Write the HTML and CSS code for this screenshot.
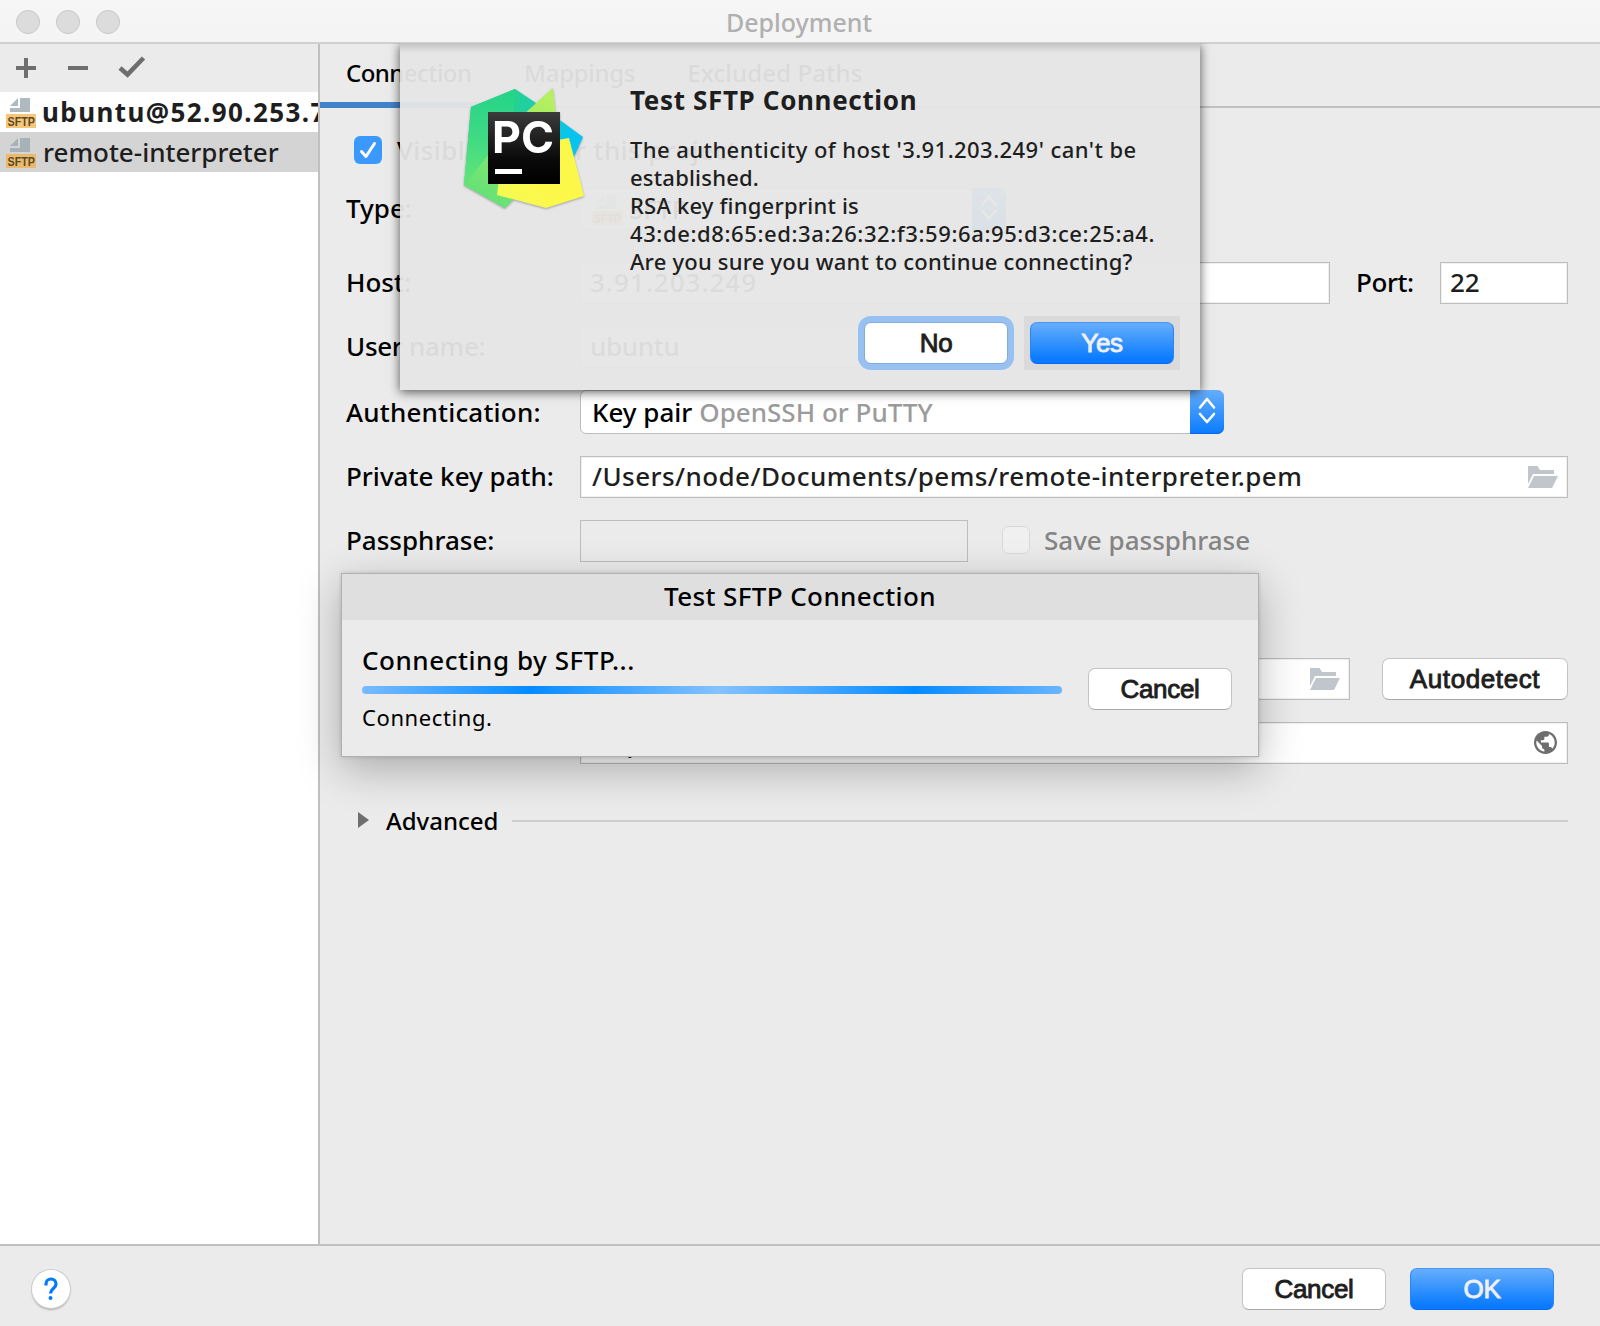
FILE: index.html
```html
<!DOCTYPE html>
<html lang="en">
<head>
<meta charset="utf-8">
<title>Deployment</title>
<link rel="stylesheet" href="styles.css">
</head>
<body>
<svg class="defs" width="0" height="0">
  <symbol id="folder" viewBox="0 0 30 22"><path d="M0 0H9.500L12 4H26V8H5L0 18Z M6 10H30L24 22H0Z"/></symbol>
  <symbol id="updown" viewBox="0 0 34 44"><path d="M10 17.500 17 9 24 17.500 M10 24 17 32 24 24" fill="none" stroke="#fff" stroke-width="2.600" stroke-linecap="round" stroke-linejoin="round"/></symbol>
</svg>
<div class="window">
  <header class="titlebar"><div class="lights"><i></i><i></i><i></i></div><h1>Deployment</h1></header>
  <div class="content">
    <aside class="sidebar">
      <div class="toolbar">
        <svg width="20" height="20" viewBox="0 0 20 20"><path d="M8 0h4v8h8v4h-8v8H8v-8H0V8h8z" fill="#6e6e6e"/></svg>
        <svg width="20" height="20" viewBox="0 0 20 20"><path d="M0 8h20v4H0z" fill="#6e6e6e"/></svg>
        <svg width="28" height="22" viewBox="0 0 28 22"><path d="M2 12 9.500 18.500 25.500 2" fill="none" stroke="#6e6e6e" stroke-width="4.600"/></svg>
      </div>
      <div class="server"><svg class="sftp" viewBox="0 0 30 30"><path d="M4 8 12 0V8Z M14 0H24V14H4V10H14Z" fill="#9aa7b0" fill-opacity=".8"/><rect y="16" width="30" height="14" fill="#f4af3d" fill-opacity=".7"/><text x="1.500" y="27.500" textLength="27.500" lengthAdjust="spacingAndGlyphs">SFTP</text></svg><b class="ls-14">ubuntu@52.90.253.7</b></div>
      <div class="server selected"><svg class="sftp" viewBox="0 0 30 30"><path d="M4 8 12 0V8Z M14 0H24V14H4V10H14Z" fill="#9aa7b0" fill-opacity=".8"/><rect y="16" width="30" height="14" fill="#f4af3d" fill-opacity=".7"/><text x="1.500" y="27.500" textLength="27.500" lengthAdjust="spacingAndGlyphs">SFTP</text></svg><span>remote-interpreter</span></div>
    </aside>
    <main class="panel">
      <nav class="tabs"><div class="tab active"><span class="ls-n5">Connection</span></div><div class="tab"><span class="ls-n3">Mappings</span></div><div class="tab"><span class="ls-1">Excluded Paths</span></div></nav>
      <div class="form">
        <div class="row visible"><span class="checkbox checked"><svg width="28" height="28" viewBox="0 0 28 28"><path d="M7.500 15.500 12 20.500 20.500 7.500" fill="none" stroke="#fff" stroke-width="3" stroke-linecap="round" stroke-linejoin="round"/></svg></span><span class="ls-4">Visible only for this project</span></div>
        <div class="row type"><label>Type:</label><div class="combo small"><svg class="sftp" viewBox="0 0 30 30"><path d="M4 8 12 0V8Z M14 0H24V14H4V10H14Z" fill="#9aa7b0" fill-opacity=".8"/><rect y="16" width="30" height="14" fill="#f4af3d" fill-opacity=".7"/><text x="1.500" y="27.500" textLength="27.500" lengthAdjust="spacingAndGlyphs">SFTP</text></svg><span>SFTP</span><svg class="arrow"><use href="#updown"/></svg></div></div>
        <div class="row host"><label>Host:</label><div class="field grow tight"><span class="ls-10">3.91.203.249</span></div><label class="port ls-n4">Port:</label><div class="field portfield"><span>22</span></div></div>
        <div class="row"><label class="ls-n3">User name:</label><div class="field short tight"><span class="ls-n3">ubuntu</span></div></div>
        <div class="row auth"><label class="ls-2">Authentication:</label><div class="combo"><span>Key pair</span><span class="hint">OpenSSH or PuTTY</span><svg class="arrow"><use href="#updown"/></svg></div></div>
        <div class="row"><label>Private key path:</label><div class="field grow"><span class="ls-45">/Users/node/Documents/pems/remote-interpreter.pem</span><svg class="folder"><use href="#folder"/></svg></div></div>
        <div class="row"><label>Passphrase:</label><div class="field short disabled"></div><span class="checkbox off"></span><span class="save">Save passphrase</span></div>
        <div class="row root"><label></label><div class="field grow"><svg class="folder"><use href="#folder"/></svg></div><button class="btn autodetect">Autodetect</button></div>
        <div class="row"><label></label><div class="field grow tight"><span>http://</span><svg class="globe" viewBox="2 2 20 20"><path d="M12 2C6.480 2 2 6.480 2 12s4.480 10 10 10 10-4.480 10-10S17.520 2 12 2zm-1 17.930c-3.950-.49-7-3.850-7-7.930 0-.62.080-1.210.21-1.790L9 15v1c0 1.100.9 2 2 2v1.930zm6.900-2.540c-.26-.81-1-1.390-1.900-1.390h-1v-3c0-.55-.45-1-1-1H8v-2h2c.55 0 1-.45 1-1V7h2c1.100 0 2-.9 2-2v-.41c2.930 1.190 5 4.060 5 7.410 0 2.080-.8 3.970-2.100 5.390z" fill="#6e6e6e"/></svg></div></div>
        <div class="advanced"><svg width="11" height="16" viewBox="0 0 11 16"><path d="M0 0 11 8 0 16Z" fill="#6e6e6e"/></svg><span>Advanced</span><hr></div>
      </div>
    </main>
  </div>
  <footer class="footer"><div class="help"><svg width="14" height="24" viewBox="0 0 14 24"><path d="M2 8.500V7a5 5 0 0 1 10 0c0 4.500-5.500 4.500-5.500 9.500" fill="none" stroke="#007aff" stroke-width="3.200"/><circle cx="6.500" cy="21" r="2" fill="#007aff"/></svg></div><button class="btn">Cancel</button><button class="btn primary">OK</button></footer>

  <section class="progress">
    <h2 class="ls-4">Test SFTP Connection</h2>
    <div class="progress-body"><div class="status"><p class="ls-55">Connecting by SFTP...</p><div class="bar"></div><small class="ls-6">Connecting.</small></div><button class="btn">Cancel</button></div>
  </section>

  <div class="sheet-clip"><section class="sheet">
    <svg class="logo" width="124" height="124" viewBox="0 0 124 124">
      <defs>
        <linearGradient id="g1" x1=".4" y1="0" x2=".3" y2="1"><stop offset="0" stop-color="#25d488"/><stop offset=".45" stop-color="#3bd984"/><stop offset="1" stop-color="#62e579"/></linearGradient>
        <linearGradient id="g2" x1="0" y1="0" x2="1" y2=".7"><stop offset=".1" stop-color="#24d28c"/><stop offset=".75" stop-color="#07c3f2"/></linearGradient>
        <linearGradient id="g6" x1="0" y1="0" x2="1" y2="0"><stop offset="0" stop-color="#24d28c"/><stop offset="1" stop-color="#1dcdaf"/></linearGradient>
        <linearGradient id="g3" x1=".7" y1="0" x2=".2" y2="1"><stop offset="0" stop-color="#b4f05f"/><stop offset="1" stop-color="#5fe079"/></linearGradient>
        <linearGradient id="g4" x1="0" y1="1" x2="1" y2="0"><stop offset="0" stop-color="#f2f956"/><stop offset=".4" stop-color="#fcf84a"/></linearGradient>
        <linearGradient id="g5" x1="0" y1="0" x2="0" y2="1"><stop offset="0" stop-color="#3c3c3c"/><stop offset=".65" stop-color="#0a0a0a"/><stop offset="1" stop-color="#000"/></linearGradient>
      </defs>
      <path d="M80 20 121 50 105 85 50 60Z" fill="url(#g2)"/>
      <path d="M9 20 53 2 50 60 43 121 2 98Z" fill="url(#g1)"/>
      <path d="M91 1 95 40 60 104 43 121 2 98 25 69 62 27Z" fill="url(#g3)"/>
      <path d="M9 20 53 2 50 44 25 69 2 98Z" fill="url(#g1)"/>
      <path d="M53 2 74 16 62 27H51Z" fill="url(#g6)"/>
      <path d="M107 51 122 109 84 121 35 108 38 84 90 54Z" fill="url(#g4)"/>
      <rect x="26" y="25" width="72" height="72" fill="url(#g5)"/>
      <text x="30" y="66" class="pc" textLength="62" lengthAdjust="spacingAndGlyphs">PC</text>
      <rect x="33" y="82" width="27" height="5" fill="#fff"/>
    </svg>
    <div class="message"><h2 class="ls-65">Test SFTP Connection</h2>
    <p><span class="ls-45">The authenticity of host '3.91.203.249' can't be</span><br><span class="ls-2">established.</span><br><span class="ls-2">RSA key fingerprint is</span><br><span class="ls-6">43:de:d8:65:ed:3a:26:32:f3:59:6a:95:d3:ce:25:a4.</span><br><span class="ls-2">Are you sure you want to continue connecting?</span></p></div>
    <div class="sheet-actions"><button class="btn focus">No</button><div class="default"><button class="btn primary">Yes</button></div></div>
  </section></div>
</div>
</body>
</html>
```
FILE: styles.css
```css
* { box-sizing: border-box; }
body { margin: 0; font-family: "Noto Sans", "Open Sans", sans-serif; font-size: 26px; font-weight: 500; line-height: 36px; color: #000; background: #ececec; }
h1, h2, p { margin: 0; font-weight: inherit; font-size: inherit; }
span, b { white-space: nowrap; }

/* tracking steps */
.ls-n5 { letter-spacing: -.55px; }
.ls-n4 { letter-spacing: -.4px; }
.ls-n3 { letter-spacing: -.3px; }
.ls-1 { letter-spacing: .15px; }
.ls-2 { letter-spacing: .2px; }
.ls-4 { letter-spacing: .38px; }
.ls-45 { letter-spacing: .44px; }
.ls-55 { letter-spacing: .55px; }
.ls-6 { letter-spacing: .6px; }
.ls-65 { letter-spacing: .65px; }
.ls-10 { letter-spacing: 1px; }
.ls-14 { letter-spacing: 1.4px; }

.defs { position: absolute; }
.window { position: relative; width: 1600px; height: 1326px; display: flex; flex-direction: column; background: #ebebeb; overflow: hidden; }

.titlebar { display: grid; grid-template-columns: 200px 1fr 200px; align-items: center; height: 44px; padding-top: 2px; background: linear-gradient(#f6f6f6, #f4f4f4); border-bottom: 2px solid #d0d0d0; }
.titlebar h1 { text-align: center; color: #b0b0b0; padding-right: 2px; font-size: 25px; }
.lights { display: flex; gap: 16px; padding-left: 16px; }
.lights i { width: 24px; height: 24px; border-radius: 50%; background: #dcdcdc; border: 1px solid #c8c8c8; }

.content { display: flex; flex: 0 0 1200px; }
.sidebar { flex: 0 0 320px; background: #fff; border-right: 2px solid #c0c0c0; overflow: hidden; }
.toolbar { display: flex; align-items: center; height: 48px; padding-left: 16px; background: #ebebeb; gap: 32px; }
.toolbar svg:last-child { margin: -2px 0 0 -2px; }
.server { display: flex; align-items: center; height: 40px; padding-left: 6px; gap: 7px; color: #1e1e1e; }
.server b { margin-left: -1px; }
.server.selected { background: #d4d4d4; }
.sftp { width: 30px; height: 30px; flex: none; margin-top: 2px; }
.sftp text { font: 700 13px "Liberation Sans", sans-serif; fill: #5b4a2b; }

.panel { flex: 1; }
.tabs { display: flex; height: 64px; border-bottom: 2px solid #c0c0c0; font-size: 24px; }
.tab { padding: 11px 26px 0; height: 64px; }
.tab.active { border-bottom: 6px solid #4083c9; width: 178px; }
.form { display: flex; flex-direction: column; gap: 22px; padding: 28px 32px 0 26px; }
.row { display: flex; height: 42px; flex: none; }
.row label { flex: 0 0 234px; padding-top: 2px; }
.visible { height: 28px; align-items: center; padding-left: 8px; gap: 15px; }
.type { margin-top: 2px; }
.host { margin-top: 10px; }
.auth { height: 44px; }
.row.auth label { padding-top: 4px; }
.root { margin-top: 74px; }
.row label.port { flex: 0 0 110px; padding-left: 26px; }
.field { display: flex; align-items: center; padding: 0 8px 2px 11px; background: #fff; border: 1px solid #bdbdbd; box-shadow: inset 0 0 0 1px #f0f0f0; color: #1e1e1e; }
.field.tight { padding-left: 9px; }
.grow { flex: 1; }
.portfield { flex: 0 0 128px; padding-left: 9px; }
.short { flex: 0 0 388px; }
.disabled { background: none; box-shadow: none; }
.folder { width: 30px; height: 22px; margin: 2px 1px 0 auto; fill: #c0c6cb; }
.globe { width: 23px; height: 23px; margin: 1px 2px 0 auto; }
.combo { display: flex; align-items: center; width: 644px; padding-left: 11px; background: #fff; border: 1px solid #bdbdbd; border-radius: 6px; gap: 7px; }
.combo.small { width: 426px; }
.arrow { width: 34px; height: calc(100% + 2px); margin: -1px -1px -1px auto; background: linear-gradient(#66aefb, #0a7bff); border-radius: 0 7px 7px 0; box-shadow: inset 0 -1px #0a66f5; }
.hint { color: #9b9b9b; }
.checkbox { width: 28px; height: 28px; border-radius: 6px; flex: none; display: block; }
.checked { background: #3b99fc; }
.checkbox svg { display: block; }
.off { margin: 6px 14px 0 34px; border: 1px solid #d9d9d9; background: #f0f0f0; }
.save { color: #858585; padding-top: 2px; }
.advanced { display: flex; align-items: center; height: 36px; margin-top: 17px; padding-left: 12px; font-size: 24px; }
.advanced svg { margin: -2px 17px 0 0; }
.advanced hr { flex: 0 0 1056px; height: 2px; border: 0; background: #cdcdcd; margin: 0 0 0 auto; }

.btn { width: 144px; height: 42px; padding: 0; flex: none; border: 1px solid #c4c4c4; border-bottom-color: #a9a9a9; border-radius: 7px; background: #fff; color: #1e1e1e; font: 400 26px "Liberation Sans", Arial, sans-serif; letter-spacing: -.3px; -webkit-text-stroke: .9px currentColor; }
.primary { color: #f0f0f8; border-color: #4599f8 #2585fb #0a66f5; background: linear-gradient(#66aefb, #0a7bff 90%); }
.autodetect { width: 186px; margin-left: 32px; letter-spacing: .6px; }
.footer { flex: 1; display: flex; align-items: flex-start; gap: 24px; border-top: 2px solid #c0c0c0; padding: 22px 46px 0 32px; }
.help { width: 38px; height: 38px; margin: 2px auto 0 0; border-radius: 50%; background: #fff; box-shadow: 0 0 0 1px #ccc, 0 2px 2px #aaa; display: grid; place-items: center; }

.progress { position: absolute; left: 341px; top: 573px; width: 918px; height: 184px; border: 1px solid #b0b0b0; background: #ebebeb; box-shadow: 0 12px 40px rgba(0, 0, 0, .28), 0 0 4px rgba(0, 0, 0, .15); }
.progress h2 { height: 46px; background: #dfdfdf; text-align: center; padding-top: 4px; }
.progress-body { display: flex; justify-content: space-between; padding: 22px 26px 0 20px; }
.status { width: 700px; }
.bar { height: 8px; margin-top: 8px; border-radius: 4px; background: linear-gradient(90deg, #78bbff, #058bff 24%, #85c2ff 51%, #058bff 79%, #6ab5ff); }
.status small { display: block; font-size: 22px; line-height: 30px; margin-top: 8px; font-weight: 400; }
.progress-body .btn { margin-top: 26px; }

.sheet-clip { position: absolute; left: 380px; top: 43px; width: 840px; height: 370px; overflow: hidden; padding: 0 20px; }
.sheet { display: grid; grid-template-columns: 168px 1fr; align-content: start; height: 347px; background: linear-gradient(rgba(0, 0, 0, .16), transparent 10px), rgba(230, 230, 230, .95); box-shadow: 0 2px 10px rgba(0, 0, 0, .65); padding-left: 62px; color: #1e1e1e; }
.logo { margin-top: 44px; filter: drop-shadow(0 1px 1px rgba(0, 0, 0, .3)); }
.pc { font: 700 44px "Inter", sans-serif; fill: #fff; }
.message { padding-top: 39px; height: 273px; }
.message h2 { font-weight: 700; line-height: 36px; }
.message p { font-size: 22px; line-height: 28px; margin-top: 17px; }
.sheet-actions { grid-column: 1 / -1; display: flex; justify-content: flex-end; padding-right: 20px; gap: 16px; }
.focus { margin-top: 6px; box-shadow: 0 0 0 6px #97c1f1; border-color: #82abe0; }
.default { background: #dadada; padding: 6px; height: 54px; display: flex; }
```
